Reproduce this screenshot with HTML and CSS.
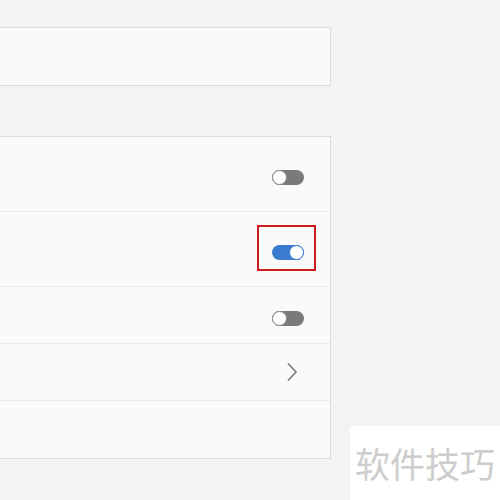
FILE: index.html
```html
<!DOCTYPE html>
<html>
<head>
<meta charset="utf-8">
<link rel="stylesheet" href="styles.css">
</head>
<body>
<div class="page">
  <div class="card card-top"></div>
  <div class="card card-list">
    <div class="row row-tall"><span class="toggle off"><span class="knob"></span></span></div>
    <div class="row row-tall"><span class="toggle on highlighted"><span class="knob"></span><span class="mark"></span></span></div>
    <div class="row row-short"><span class="toggle off"><span class="knob"></span></span></div>
    <div class="row row-short row-link">
      <svg class="chev" width="12" height="20" viewBox="0 0 12 20"><path d="M2 1.5 L10 10 L2 18.5" fill="none" stroke="#7a7a7a" stroke-width="1.6"/></svg>
    </div>
    <div class="row row-last"></div>
  </div>
</div>
<div class="watermark">软件技巧</div>
</body>
</html>
```
FILE: styles.css
```css
html, body {
  margin: 0;
  padding: 0;
  background: #f3f3f3;
  width: 500px;
  height: 500px;
  overflow: hidden;
  font-family: "Noto Sans", "Noto Sans CJK SC", sans-serif;
}
.page {
  padding-top: 27px;
  display: flex;
  flex-direction: column;
  gap: 50px;
}
.card {
  margin-left: -1px;
  width: 332px;
  box-sizing: border-box;
  background: #fafafa;
  border: 1px solid #dcdcdc;
}
.card-top {
  height: 59px;
}
.card-list {
  display: flex;
  flex-direction: column;
}
.row {
  display: flex;
  justify-content: flex-end;
  align-items: center;
  box-sizing: border-box;
  padding-right: 26px;
  border-bottom: 1px solid #e9e9e9;
}
.row-tall { height: 75px; }
.row-short { height: 57px; }
.row-last { height: 57px; border-bottom: none; }
.row-link { padding-right: 32px; }
.toggle {
  position: relative;
  display: block;
  width: 32px;
  height: 15px;
  border-radius: 8px;
  margin-top: 6px;
}
.toggle.off { background: #7a7a7a; }
.toggle.on { background: #3a7bd0; }
.knob {
  position: absolute;
  top: 0;
  width: 15px;
  height: 15px;
  box-sizing: border-box;
  border-radius: 50%;
  background: #fff;
  border: 1px solid #8a8a8a;
}
.toggle.off .knob { left: 0; }
.toggle.on .knob { right: 0; border-color: #3a7bd0; }
.mark {
  position: absolute;
  left: -15px;
  top: -20px;
  width: 59px;
  height: 46px;
  box-sizing: border-box;
  border: 2px solid #cc1b1b;
}
.chev { display: block; }
.watermark {
  position: absolute;
  left: 350px;
  top: 426px;
  width: 150px;
  height: 74px;
  background: #fff;
  color: #cdcdcd;
  font-family: "Noto Sans CJK SC", sans-serif;
  font-size: 35px;
  line-height: 74px;
  padding-left: 5px;
  box-sizing: border-box;
  white-space: nowrap;
}
```
